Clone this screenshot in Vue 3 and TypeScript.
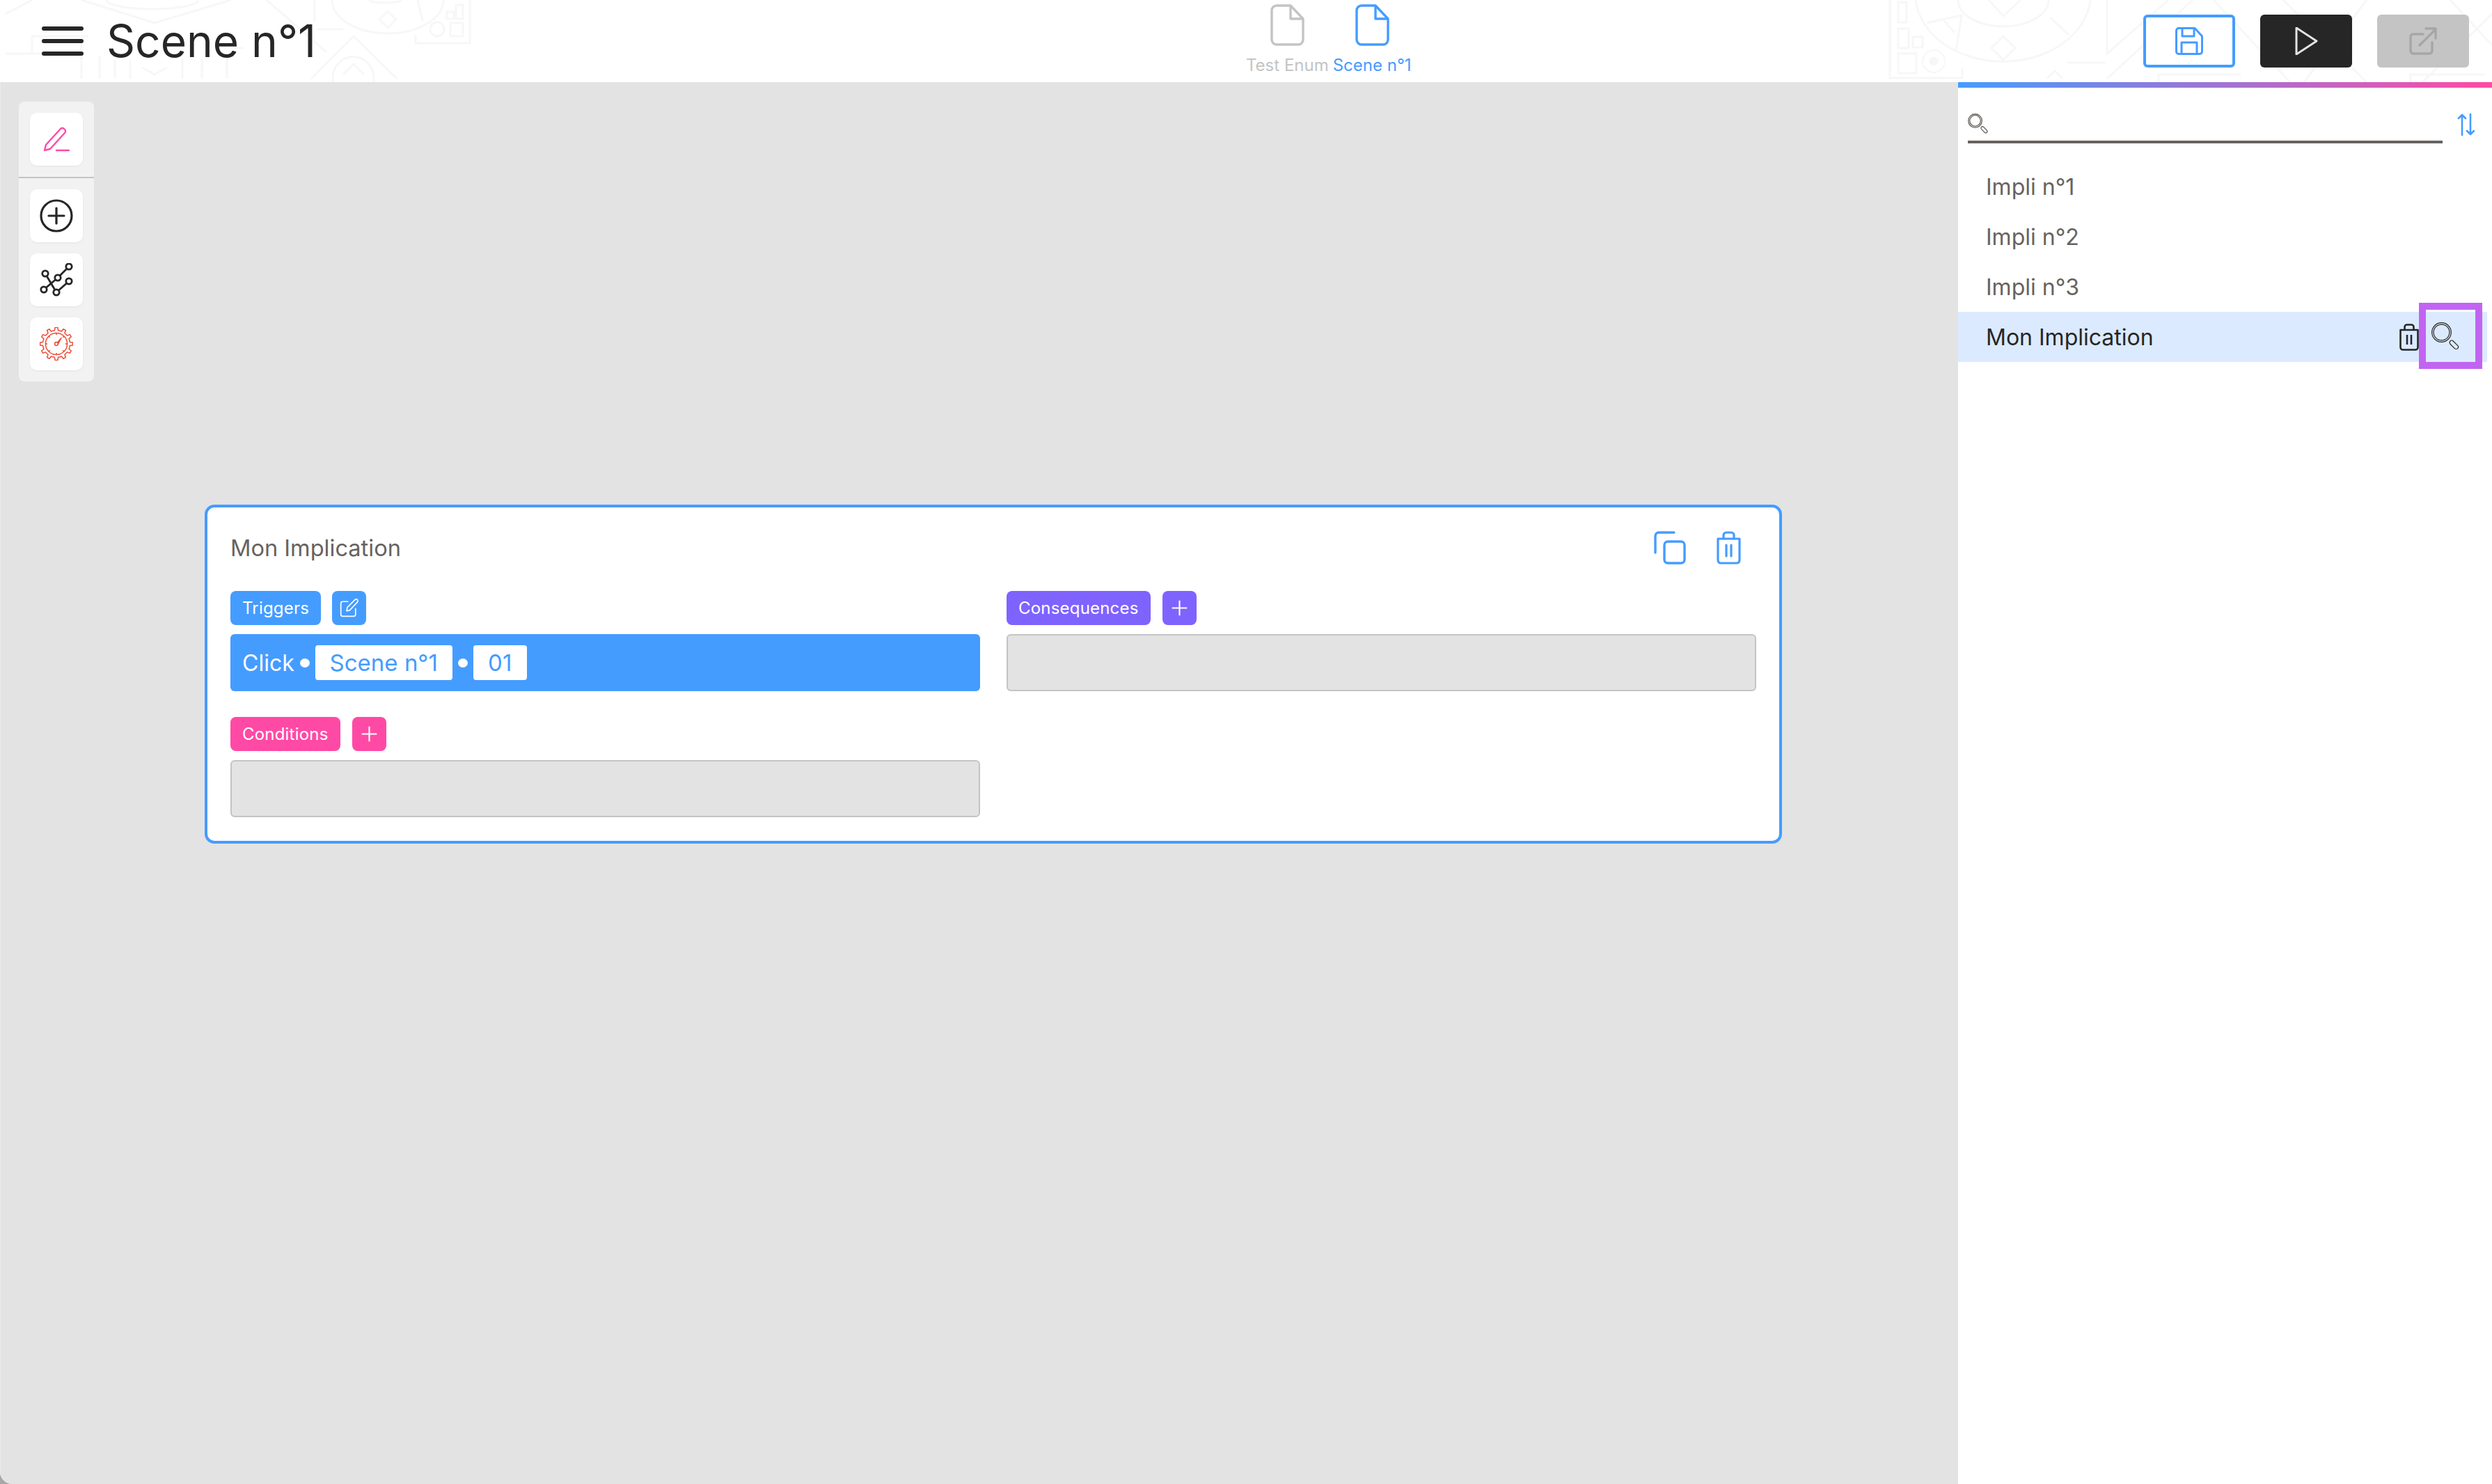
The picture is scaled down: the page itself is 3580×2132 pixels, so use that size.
<template>
  <div class="app">
    <header class="topbar">
      <svg class="pattern" viewBox="0 0 3580 118" fill="none" stroke="#f7f7f7" stroke-width="3">
        <!-- left decoration -->
        <path d="M8 20L46 0M117 0L222 33L332 0M153 0A66 13 0 0 0 285 0M383 0L469 75M8 77H117M46 77V52H127M117 57V113M143 80V113M165 85V113M187 85V113M204 97L222 107L240 97M262 85V113M290 85V113M326 80V113" />
        <path d="M452 0V32M455 42H493M337 69H350M477 0A80 48 0 0 0 637 0M530 0A24 5 0 0 0 577 0M557 16L569 28L557 40L545 28ZM600 0L607 30M597 50V62H675V0M642 17H652V27H642ZM655 7H665V27H655ZM647 33H665V52H647Z" />
        <circle cx="628" cy="42" r="10" />
        <path d="M447 113L508 52L570 113M478 118V112A29 30 0 0 1 537 112V118M493 107L508 92L523 107" />
        <!-- right decoration -->
        <path d="M2715 0V112H2820M2819 97V112M2727 3H2739V32H2727ZM2727 41H2742V69H2727ZM2748 53H2762V68H2748ZM2727 77H2753V105H2727Z" />
        <circle cx="2778" cy="88" r="16" stroke-width="2" />
        <circle cx="2778" cy="88" r="5" fill="#f7f7f7" />
        <path d="M2752 0A126 97 0 0 0 3003 0M2813 0A65 38 0 0 0 2943 0M2857 0L2878 23L2903 0M2878 52L2895 69L2878 86L2861 69ZM2768 33L2818 22L2810 73M2793 30L2808 47M2945 25L2972 50M2970 90H3025M3027 0V77L3115 0M3027 113L3150 0M2940 113L2952 102L2963 113" />
        <path d="M3101 118V107H3219M3180 0L3290 118M3280 0L3400 118M3400 0L3310 118M3463 118V107H3570M3520 0L3580 65M3580 20L3480 118" />
      </svg>
      <div class="title-area">
        <svg class="menu-icon" viewBox="0 0 60 42" fill="none" stroke="#262626" stroke-width="6" stroke-linecap="round">
          <path d="M3 3H57M3 21H57M3 39H57" />
        </svg>
        <h1 class="title">Scene n°1</h1>
      </div>

      <nav class="tabs">
        <div v-for="tab in tabs" :key="tab.name" class="tab" :class="{ active: tab.active }">
          <svg class="file-icon" viewBox="0 0 49 60" fill="none" stroke="currentColor" stroke-width="3.4" stroke-linejoin="round">
            <path d="M9 2H29L47 21V51a7 7 0 0 1-7 7H9a7 7 0 0 1-7-7V9a7 7 0 0 1 7-7Z" />
            <path d="M29 2V21H47" />
          </svg>
          <span>{{ tab.name }}</span>
        </div>
      </nav>

      <div class="actions">
        <button class="action save">
          <svg viewBox="0 0 40 40" fill="none" stroke="#459cff" stroke-width="3" stroke-linejoin="round">
            <path d="M5 1.5H28L38.5 13V35a3.5 3.5 0 0 1-3.5 3.5H5A3.5 3.5 0 0 1 1.5 35V5A3.5 3.5 0 0 1 5 1.5Z" />
            <path d="M10 1.5V13H27V1.5M9 38.5V22H31V38.5" />
          </svg>
        </button>
        <button class="action play">
          <svg viewBox="0 0 40 40" fill="none" stroke="#e3e3e3" stroke-width="3" stroke-linejoin="round">
            <path d="M6 1V39L35 20Z" />
          </svg>
        </button>
        <button class="action export">
          <svg viewBox="0 0 40 40" fill="none" stroke="#a6a6a6" stroke-width="3.4" stroke-linecap="round" stroke-linejoin="round">
            <path d="M20 10H6a4 4 0 0 0-4 4V34a4 4 0 0 0 4 4H29a4 4 0 0 0 4-4V22" />
            <path d="M15 26L38 3M24 2H38V16" />
          </svg>
        </button>
      </div>
    </header>

    <div class="workspace">
      <main class="canvas">
        <aside class="toolbox">
          <button class="tool">
            <svg class="pencil" viewBox="0 0 40 40" fill="none" stroke="#ff4aa5" stroke-width="2.4" stroke-linecap="round" stroke-linejoin="round">
              <path d="M3 36L5 28L26 5a3.5 3.5 0 0 1 5 0l1 1a3.5 3.5 0 0 1 0 5L11 34Z" />
              <path d="M20 36H38" />
            </svg>
          </button>
          <div class="tool-sep"></div>
          <button class="tool">
            <svg viewBox="0 0 48 48" fill="none" stroke="#262626" stroke-width="3.2" stroke-linecap="round">
              <circle cx="24" cy="24" r="22" />
              <path d="M24 13V35M13 24H35" />
            </svg>
          </button>
          <button class="tool tool-gap">
            <svg viewBox="0 0 48 48" fill="none" stroke="#262626" stroke-width="2.8">
              <path d="M8 15L24 42M6 38L26 21L42 5M24 42L42 26" />
              <g fill="#fff">
                <circle cx="8" cy="15" r="4.2" />
                <circle cx="6" cy="38" r="4.2" />
                <circle cx="26" cy="21" r="4.2" />
                <circle cx="24" cy="42" r="4.2" />
                <circle cx="42" cy="5" r="4.2" />
                <circle cx="42" cy="26" r="4.2" />
              </g>
            </svg>
          </button>
          <button class="tool tool-gap">
            <svg viewBox="0 0 48 48" fill="none" stroke="#ee4b34" stroke-width="1.5" stroke-linejoin="round">
              <path :d="gearPath" />
              <circle cx="24" cy="24" r="15.6" />
              <path d="M24 8.4V11M24 37V39.6M8.4 24H11M37 24H39.6M13 13L14.8 14.8M33.2 33.2L35 35M13 35L14.8 33.2M33.2 14.8L35 13" />
              <circle cx="24" cy="24" r="2.4" />
              <path d="M25.5 22.2L31 15.5L26.2 24.6" />
            </svg>
          </button>
        </aside>

        <section class="card">
          <div class="card-head">
            <span class="card-title">Mon Implication</span>
            <div class="card-actions">
              <svg class="copy-icon" viewBox="0 0 47 48" fill="none" stroke="#459cff" stroke-width="3.4" stroke-linecap="round" stroke-linejoin="round">
                <path d="M3 31V7a5 5 0 0 1 5-5H30" />
                <rect x="16" y="15" width="29" height="31" rx="5" />
              </svg>
              <svg class="trash-icon" viewBox="0 0 35 48" fill="none" stroke="#459cff" stroke-width="3.2" stroke-linecap="round" stroke-linejoin="round">
                <path d="M2 11H33V42a4 4 0 0 1-4 4H6a4 4 0 0 1-4-4Z" />
                <path d="M10 11V6a4 4 0 0 1 4-4H21a4 4 0 0 1 4 4V11M14 20V36M21 20V36" />
              </svg>
            </div>
          </div>

          <div class="card-grid">
            <div class="block">
              <div class="block-head head-tight">
                <span class="badge blue">Triggers</span>
                <button class="badge-btn blue">
                  <svg viewBox="0 0 32 32" fill="none" stroke="#fff" stroke-width="2" stroke-linecap="round" stroke-linejoin="round">
                    <path d="M14 5H5a3 3 0 0 0-3 3V27a3 3 0 0 0 3 3H24a3 3 0 0 0 3-3V17" />
                    <path d="M12 21L13 15L26 2a2.5 2.5 0 0 1 4 4L17 20Z" />
                  </svg>
                </button>
              </div>
              <div class="trigger-bar">
                <span class="trigger-word">Click</span>
                <i class="dot"></i>
                <span class="chip chip-scene">Scene n°1</span>
                <i class="dot"></i>
                <span class="chip chip-num">01</span>
              </div>
            </div>

            <div class="block">
              <div class="block-head">
                <span class="badge violet">Consequences</span>
                <button class="badge-btn violet">
                  <svg viewBox="0 0 20 20" stroke="#fff" stroke-width="1.6"><path d="M10 2V18M2 10H18" /></svg>
                </button>
              </div>
              <div class="empty-box"></div>
            </div>

            <div class="block">
              <div class="block-head">
                <span class="badge pink">Conditions</span>
                <button class="badge-btn pink">
                  <svg viewBox="0 0 20 20" stroke="#fff" stroke-width="1.6"><path d="M10 2V18M2 10H18" /></svg>
                </button>
              </div>
              <div class="empty-box"></div>
            </div>
          </div>
        </section>
      </main>

      <aside class="sidebar">
        <div class="gradient"></div>
        <div class="search-row">
          <div class="search-field">
            <svg class="search-icon" viewBox="0 0 40 40" fill="none" stroke="#666360" stroke-width="1.8">
              <circle cx="14.5" cy="14.5" r="13.5" />
              <circle cx="14.5" cy="14.5" r="10.8" />
              <rect x="-3" y="0" width="6" height="15" rx="3" transform="translate(27 27) rotate(-45)" />
            </svg>
          </div>
          <svg class="sort-icon" viewBox="0 0 25 32" fill="none" stroke="#459cff" stroke-width="2.6" stroke-linecap="round" stroke-linejoin="round">
            <path d="M7 31V2M2 7L7 2L12 7M19 1V30M14 25L19 30L24 25" />
          </svg>
        </div>
        <ul class="list">
          <li v-for="item in implis" :key="item" class="list-item" :class="{ selected: item === selected }">
            <span>{{ item }}</span>
            <template v-if="item === selected">
              <svg class="row-trash" viewBox="0 0 28 39" fill="none" stroke="#262626" stroke-width="2.6" stroke-linejoin="round">
                <path d="M1.5 9H26.5V34a3.5 3.5 0 0 1-3.5 3.5H5A3.5 3.5 0 0 1 1.5 34Z" />
                <path d="M7.5 9V5a3.5 3.5 0 0 1 3.5-3.5H17A3.5 3.5 0 0 1 20.5 5V9M11 16V30M17 16V30" />
              </svg>
              <div class="highlight-box">
                <svg class="row-search" viewBox="0 0 40 40" fill="none" stroke="#262626" stroke-width="1.2">
                  <circle cx="14.5" cy="14.5" r="13.8" />
                  <circle cx="14.5" cy="14.5" r="11.4" />
                  <rect x="-3" y="0" width="6" height="15" rx="3" transform="translate(27 27) rotate(-45)" />
                </svg>
              </div>
            </template>
          </li>
        </ul>
      </aside>
    </div>
  </div>
</template>

<script setup lang="ts">
const tabs = [
  { name: 'Test Enum', active: false },
  { name: 'Scene n°1', active: true },
];

const implis = ['Impli n°1', 'Impli n°2', 'Impli n°3', 'Mon Implication'];
const selected = 'Mon Implication';

// gear outline with 12 teeth for the settings tool
const gearPath = (() => {
  const teeth = 12;
  const pts: string[] = [];
  for (let i = 0; i < teeth; i++) {
    const a = (i / teeth) * Math.PI * 2;
    const step = (Math.PI * 2) / teeth;
    const corners: [number, number][] = [
      [19.5, a - step * 0.5],
      [19.5, a - step * 0.25],
      [23.5, a - step * 0.16],
      [23.5, a + step * 0.16],
      [19.5, a + step * 0.25],
    ];
    for (const [r, t] of corners) {
      pts.push(`${(24 + r * Math.cos(t)).toFixed(2)} ${(24 + r * Math.sin(t)).toFixed(2)}`);
    }
  }
  return `M${pts.join('L')}Z`;
})();
</script>

<style>
html,
body {
  margin: 0;
  background: #fff;
}
</style>

<style scoped>
.app {
  width: 3580px;
  height: 2132px;
  display: flex;
  flex-direction: column;
  overflow: hidden;
  font-family: Inter, "Liberation Sans", sans-serif;
  background: #fff;
}

button {
  border: 0;
  padding: 0;
  background: none;
  display: flex;
  align-items: center;
  justify-content: center;
}

.topbar {
  position: relative;
  height: 118px;
  flex: none;
  display: flex;
  align-items: center;
  justify-content: space-between;
  background: #fff;
  padding: 0 33px 0 60px;
  box-sizing: border-box;
}

.pattern {
  position: absolute;
  top: 0;
  left: 0;
  width: 3580px;
  height: 118px;
}

.title-area {
  position: relative;
  width: 1000px;
  display: flex;
  align-items: center;
  gap: 33px;
}

.menu-icon {
  width: 60px;
  height: 42px;
  flex: none;
}

.title {
  margin: 0;
  font-weight: 400;
  font-size: 64px;
  line-height: 1;
  color: #262626;
}

.tabs {
  position: absolute;
  top: 6px;
  left: 1790px;
  display: flex;
  gap: 6px;
}

.tab {
  display: flex;
  flex-direction: column;
  align-items: center;
  gap: 13px;
  font-size: 24px;
  line-height: 29px;
  color: #c4c4c4;
}

.tab.active {
  color: #459cff;
}

.file-icon {
  width: 49px;
  height: 60px;
}

.actions {
  position: relative;
  display: flex;
  gap: 36px;
}

.action {
  width: 132px;
  height: 76px;
  border-radius: 6px;
  box-sizing: border-box;
}

.action svg {
  width: 40px;
  height: 40px;
}

.save {
  border: 4px solid #459cff;
  background: #fff;
}

.play {
  background: #262626;
}

.export {
  background: #c4c4c4;
}

.workspace {
  flex: 1;
  display: flex;
  min-height: 0;
  background: #a8a8a8;
}

.canvas {
  position: relative;
  flex: 1;
  background: #e3e3e3;
  border-bottom-left-radius: 18px;
  box-shadow: inset 1px 0 0 #ebebeb;
  padding: 28px 0 0 27px;
}

.toolbox {
  width: 108px;
  box-sizing: border-box;
  padding: 16px 0;
  display: flex;
  flex-direction: column;
  align-items: center;
  background: #f2f2f2;
  border-radius: 8px;
}

.tool {
  width: 76px;
  height: 76px;
  background: #fff;
  border-radius: 10px;
  box-shadow: 0 1px 3px rgba(0, 0, 0, 0.06);
}

.tool svg {
  width: 48px;
  height: 48px;
}

.tool .pencil {
  width: 40px;
  height: 40px;
}

.tool-gap {
  margin-top: 16px;
}

.tool-sep {
  width: 100%;
  height: 2px;
  margin: 16px 0;
  background: #c4c4c4;
}

.card {
  position: absolute;
  left: 294px;
  top: 607px;
  width: 2266px;
  height: 487px;
  box-sizing: border-box;
  background: #fff;
  border: 4px solid #459cff;
  border-radius: 14px;
  padding: 33px 33px 34px;
}

.card-head {
  display: flex;
  align-items: center;
  justify-content: space-between;
  height: 52px;
  margin-bottom: 35px;
}

.card-title {
  font-size: 32.6px;
  line-height: 48px;
  margin-bottom: 3px;
  color: #666360;
}

.card-actions {
  display: flex;
  align-items: center;
  gap: 44px;
  padding: 0 22px 3px 0;
}

.copy-icon {
  width: 47px;
  height: 48px;
}

.trash-icon {
  width: 35px;
  height: 48px;
}

.card-grid {
  display: grid;
  grid-template-columns: 1077px 1077px;
  column-gap: 38px;
  row-gap: 37px;
}

.block-head {
  display: flex;
  gap: 17px;
  margin-bottom: 13px;
}

.head-tight {
  gap: 16px;
}

.badge {
  height: 49px;
  display: flex;
  align-items: center;
  padding: 0 17px;
  border-radius: 8px;
  font-size: 24px;
  letter-spacing: 0.2px;
  color: #fff;
}

.badge-btn {
  width: 49px;
  height: 49px;
  border-radius: 8px;
}

.badge-btn svg {
  width: 27px;
  height: 27px;
}

.blue {
  background: #459cff;
}

.violet {
  background: #7f63ff;
}

.pink {
  background: #ff4aa5;
}

.trigger-bar {
  height: 82px;
  display: flex;
  align-items: center;
  padding: 0 17px;
  background: #459cff;
  border-radius: 6px;
  font-size: 32px;
  color: #fff;
}

.dot {
  width: 14px;
  height: 13px;
  margin: 0 8px;
  border-radius: 50%;
  background: #fff;
}

.chip {
  height: 50px;
  display: flex;
  align-items: center;
  justify-content: center;
  background: #fff;
  color: #459cff;
  border-radius: 4px;
  font-size: 33px;
}

.chip-scene {
  width: 197px;
}

.chip-num {
  width: 77px;
}

.empty-box {
  height: 82px;
  box-sizing: border-box;
  background: #e3e3e3;
  border: 2px solid #c4c4c4;
  border-radius: 6px;
}

.sidebar {
  width: 767px;
  flex: none;
  background: #fff;
}

.gradient {
  height: 8px;
  background: linear-gradient(90deg, #459cff, #ff4aa5);
}

.search-row {
  display: flex;
  align-items: flex-start;
  padding: 37px 25px 0 14px;
  gap: 21px;
}

.search-field {
  flex: 1;
  height: 39px;
  border-bottom: 4px solid #666360;
}

.search-icon {
  width: 29px;
  height: 29px;
  display: block;
}

.sort-icon {
  width: 25px;
  height: 32px;
  flex: none;
}

.list {
  list-style: none;
  margin: 26px 7px 0 0;
  padding: 0;
}

.list-item {
  position: relative;
  height: 72px;
  display: flex;
  align-items: center;
  padding-left: 40px;
  font-size: 32px;
  color: #666360;
}

.list-item span {
  flex: 1;
}

.list-item.selected {
  background: #dbeaff;
  color: #262626;
}

.row-trash {
  width: 28px;
  height: 39px;
  margin-right: 98px;
}

.highlight-box {
  position: absolute;
  left: 662px;
  top: -13px;
  width: 91px;
  height: 95px;
  box-sizing: border-box;
  border: 10px solid #c264f2;
  padding: 18px 0 0 8px;
}

.row-search {
  display: block;
  width: 40px;
  height: 40px;
}
</style>
